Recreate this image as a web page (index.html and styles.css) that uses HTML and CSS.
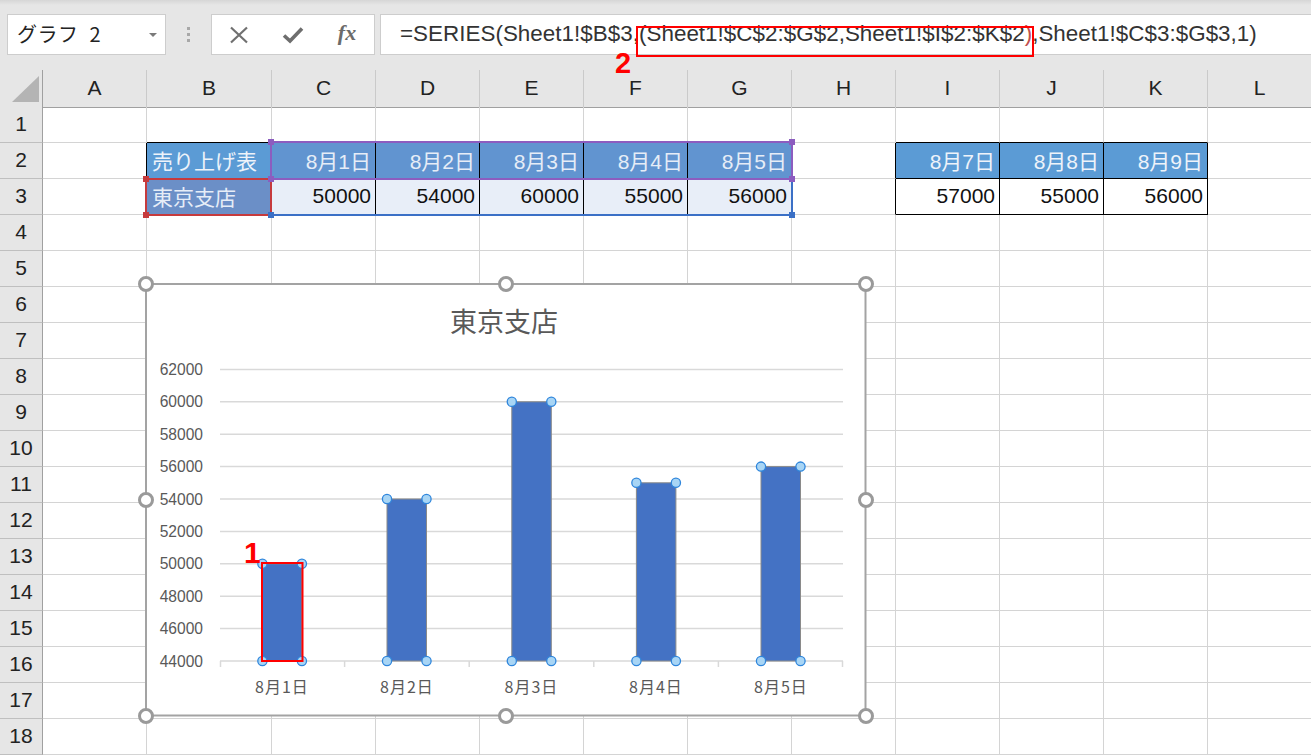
FILE: index.html
```html
<!DOCTYPE html>
<html lang="ja">
<head>
<meta charset="utf-8">
<title>Excel</title>
<link rel="stylesheet" href="styles.css">
</head>
<body>
<div class="app">
  <div class="toolbar">
    <div class="namebox"><span class="nbtext">グラフ 2</span><span class="caret"></span></div>
    <div class="grip"><i></i><i></i><i></i></div>
    <div class="btns">
      <div class="btn"><svg width="20" height="18" viewBox="0 0 20 18"><path d="M2 1.5 L18 16.5 M18 1.5 L2 16.5" stroke="#707070" stroke-width="2.2" fill="none"/></svg></div>
      <div class="btn"><svg width="22" height="18" viewBox="0 0 22 18"><path d="M2 9.5 L8 15 L20 2.5" stroke="#6e6e6e" stroke-width="3.6" fill="none"/></svg></div>
      <div class="btn fx">fx</div>
    </div>
    <div class="fbox"><span class="ftext">=SERIES(Sheet1!$B$3,(Sheet1!$C$2:$G$2,Sheet1!$I$2:$K$2<span class="rp">)</span>,Sheet1!$C$3:$G$3,1)</span></div>
  </div>

  <div class="sheet">
    <div class="r hdr"><div class="corner"><svg width="42" height="36" viewBox="0 0 42 36"><polygon points="12,32 39,6 39,32" fill="#b4b4b4"/></svg></div><div>A</div><div>B</div><div>C</div><div>D</div><div>E</div><div>F</div><div>G</div><div>H</div><div>I</div><div>J</div><div>K</div><div>L</div></div>
    <div class="r"><div class="rh">1</div><div></div><div class="bb"></div><div class="bb"></div><div class="bb"></div><div class="bb"></div><div class="bb"></div><div class="bb"></div><div></div><div class="bb"></div><div class="bb"></div><div class="bb"></div><div></div></div>
    <div class="r"><div class="rh">2</div><div class="br"></div><div class="t k hb lft">売り上げ表</div><div class="t k hs">8月1日</div><div class="t k hs">8月2日</div><div class="t k hs">8月3日</div><div class="t k hs">8月4日</div><div class="t k hs">8月5日</div><div class="br"></div><div class="t k hb">8月7日</div><div class="t k hb">8月8日</div><div class="t k hb">8月9日</div><div></div></div>
    <div class="r"><div class="rh">3</div><div class="br"></div><div class="t k sb lft">東京支店</div><div class="t k sc">50000</div><div class="t k sc">54000</div><div class="t k sc">60000</div><div class="t k sc">55000</div><div class="t k sc">56000</div><div class="br"></div><div class="t k">57000</div><div class="t k">55000</div><div class="t k">56000</div><div></div></div>
    <div class="r"><div class="rh">4</div><div></div><div></div><div></div><div></div><div></div><div></div><div></div><div></div><div></div><div></div><div></div><div></div></div>
    <div class="r"><div class="rh">5</div><div></div><div></div><div></div><div></div><div></div><div></div><div></div><div></div><div></div><div></div><div></div><div></div></div>
    <div class="r"><div class="rh">6</div><div></div><div></div><div></div><div></div><div></div><div></div><div></div><div></div><div></div><div></div><div></div><div></div></div>
    <div class="r"><div class="rh">7</div><div></div><div></div><div></div><div></div><div></div><div></div><div></div><div></div><div></div><div></div><div></div><div></div></div>
    <div class="r"><div class="rh">8</div><div></div><div></div><div></div><div></div><div></div><div></div><div></div><div></div><div></div><div></div><div></div><div></div></div>
    <div class="r"><div class="rh">9</div><div></div><div></div><div></div><div></div><div></div><div></div><div></div><div></div><div></div><div></div><div></div><div></div></div>
    <div class="r"><div class="rh">10</div><div></div><div></div><div></div><div></div><div></div><div></div><div></div><div></div><div></div><div></div><div></div><div></div></div>
    <div class="r"><div class="rh">11</div><div></div><div></div><div></div><div></div><div></div><div></div><div></div><div></div><div></div><div></div><div></div><div></div></div>
    <div class="r"><div class="rh">12</div><div></div><div></div><div></div><div></div><div></div><div></div><div></div><div></div><div></div><div></div><div></div><div></div></div>
    <div class="r"><div class="rh">13</div><div></div><div></div><div></div><div></div><div></div><div></div><div></div><div></div><div></div><div></div><div></div><div></div></div>
    <div class="r"><div class="rh">14</div><div></div><div></div><div></div><div></div><div></div><div></div><div></div><div></div><div></div><div></div><div></div><div></div></div>
    <div class="r"><div class="rh">15</div><div></div><div></div><div></div><div></div><div></div><div></div><div></div><div></div><div></div><div></div><div></div><div></div></div>
    <div class="r"><div class="rh">16</div><div></div><div></div><div></div><div></div><div></div><div></div><div></div><div></div><div></div><div></div><div></div><div></div></div>
    <div class="r"><div class="rh">17</div><div></div><div></div><div></div><div></div><div></div><div></div><div></div><div></div><div></div><div></div><div></div><div></div></div>
    <div class="r"><div class="rh">18</div><div></div><div></div><div></div><div></div><div></div><div></div><div></div><div></div><div></div><div></div><div></div><div></div></div>
  </div>

  <!-- range highlight overlays -->
  <div class="sel sel-blue"></div>
  <div class="sel sel-red"></div>
  <div class="sel sel-purple"></div>
  <i class="hd hd-blue" style="left:268px;top:212px"></i>
  <i class="hd hd-blue" style="left:789px;top:212px"></i>
  <i class="hd hd-red" style="left:143px;top:176px"></i>
  <i class="hd hd-red" style="left:143px;top:212px"></i>
  <i class="hd hd-purple" style="left:268px;top:139px"></i>
  <i class="hd hd-purple" style="left:789px;top:139px"></i>
  <i class="hd hd-purple" style="left:268px;top:176px"></i>
  <i class="hd hd-purple" style="left:789px;top:176px"></i>

  <!-- chart object -->
  <svg class="chart" width="740" height="452" viewBox="136 274 740 452">
    <rect x="146" y="284" width="719.5" height="431.5" fill="#fff" stroke="#a3a3a3" stroke-width="2"/>
    <text class="ctitle" x="504" y="332">東京支店</text>
    <g stroke="#d9d9d9" stroke-width="1.5">
      <line x1="220" x2="843" y1="369.4" y2="369.4"/>
      <line x1="220" x2="843" y1="401.8" y2="401.8"/>
      <line x1="220" x2="843" y1="434.2" y2="434.2"/>
      <line x1="220" x2="843" y1="466.6" y2="466.6"/>
      <line x1="220" x2="843" y1="499" y2="499"/>
      <line x1="220" x2="843" y1="531.4" y2="531.4"/>
      <line x1="220" x2="843" y1="563.8" y2="563.8"/>
      <line x1="220" x2="843" y1="596.2" y2="596.2"/>
      <line x1="220" x2="843" y1="628.6" y2="628.6"/>
      <line x1="220" x2="843" y1="661" y2="661"/>
      <line x1="220.5" x2="220.5" y1="661" y2="667"/>
      <line x1="344.6" x2="344.6" y1="661" y2="667"/>
      <line x1="469.2" x2="469.2" y1="661" y2="667"/>
      <line x1="593.8" x2="593.8" y1="661" y2="667"/>
      <line x1="718.4" x2="718.4" y1="661" y2="667"/>
      <line x1="842.5" x2="842.5" y1="661" y2="667"/>
    </g>
    <g class="ylab">
      <text x="203" y="374.9">62000</text>
      <text x="203" y="407.3">60000</text>
      <text x="203" y="439.7">58000</text>
      <text x="203" y="472.1">56000</text>
      <text x="203" y="504.5">54000</text>
      <text x="203" y="536.9">52000</text>
      <text x="203" y="569.3">50000</text>
      <text x="203" y="601.7">48000</text>
      <text x="203" y="634.1">46000</text>
      <text x="203" y="666.5">44000</text>
    </g>
    <g fill="#4472c4" stroke="#8a8a8a" stroke-width="1">
      <rect x="262.4" y="563.8" width="39.5" height="97.2"/>
      <rect x="387" y="499" width="39.5" height="162"/>
      <rect x="511.8" y="401.8" width="39.5" height="259.2"/>
      <rect x="636.4" y="482.8" width="39.5" height="178.2"/>
      <rect x="761" y="466.6" width="39.5" height="194.4"/>
    </g>
    <g fill="#a8d5f5" stroke="#2f86dc" stroke-width="1.3">
      <circle cx="262.4" cy="563.8" r="4.6"/><circle cx="301.9" cy="563.8" r="4.6"/>
      <circle cx="262.4" cy="661" r="4.6"/><circle cx="301.9" cy="661" r="4.6"/>
      <circle cx="387" cy="499" r="4.6"/><circle cx="426.5" cy="499" r="4.6"/>
      <circle cx="387" cy="661" r="4.6"/><circle cx="426.5" cy="661" r="4.6"/>
      <circle cx="511.8" cy="401.8" r="4.6"/><circle cx="551.3" cy="401.8" r="4.6"/>
      <circle cx="511.8" cy="661" r="4.6"/><circle cx="551.3" cy="661" r="4.6"/>
      <circle cx="636.4" cy="482.8" r="4.6"/><circle cx="675.9" cy="482.8" r="4.6"/>
      <circle cx="636.4" cy="661" r="4.6"/><circle cx="675.9" cy="661" r="4.6"/>
      <circle cx="761" cy="466.6" r="4.6"/><circle cx="800.5" cy="466.6" r="4.6"/>
      <circle cx="761" cy="661" r="4.6"/><circle cx="800.5" cy="661" r="4.6"/>
    </g>
    <rect x="262" y="563" width="40.5" height="98" fill="none" stroke="#ff0000" stroke-width="2"/>
    <g class="xlab">
      <text x="282" y="693">8月1日</text>
      <text x="407" y="693">8月2日</text>
      <text x="531.5" y="693">8月3日</text>
      <text x="656" y="693">8月4日</text>
      <text x="781" y="693">8月5日</text>
    </g>
    <text class="mark" x="244" y="563">1</text>
    <g fill="#fff" stroke="#9a9a9a" stroke-width="3">
      <circle cx="146" cy="284" r="6.5"/>
      <circle cx="506" cy="284" r="6.5"/>
      <circle cx="866" cy="284" r="6.5"/>
      <circle cx="146" cy="500" r="6.5"/>
      <circle cx="866" cy="500" r="6.5"/>
      <circle cx="146" cy="716" r="6.5"/>
      <circle cx="506" cy="716" r="6.5"/>
      <circle cx="866" cy="716" r="6.5"/>
    </g>
  </svg>

  <!-- annotations -->
  <div class="callout-box"></div>
  <div class="callout-num">2</div>
</div>
</body>
</html>
```
FILE: styles.css
```css
* { box-sizing: border-box; margin: 0; padding: 0; }
html, body { width: 1311px; height: 755px; overflow: hidden; background: #fff; }
body { font-family: "Liberation Sans", "Noto Sans CJK JP", sans-serif; color: #222; }
.app { position: relative; width: 1311px; height: 755px; overflow: hidden; }

/* formula bar */
.toolbar {
  height: 70px;
  background: linear-gradient(#d6d6d6, #e6e6e6 5px);
  display: flex;
  align-items: flex-start;
  padding: 14px 0 0 7px;
}
.namebox {
  width: 159px; height: 41px;
  background: #fff; border: 1px solid #cdcdcd;
  display: flex; align-items: center; justify-content: space-between;
  padding: 0 8px 2px 9px;
  font-family: "Noto Sans CJK JP", sans-serif; font-size: 20px; color: #222;
}
.nbtext { word-spacing: 6px; letter-spacing: 0.5px; }
.caret {
  width: 0; height: 0;
  border-left: 4px solid transparent; border-right: 4px solid transparent;
  border-top: 4px solid #7a7a7a;
  margin-top: 2px;
}
.grip {
  width: 45px; height: 41px;
  display: flex; flex-direction: column; align-items: center; justify-content: center; gap: 3px;
}
.grip i { display: block; width: 3px; height: 3px; background: #a8a8a8; }
.btns {
  width: 164px; height: 41px;
  background: #fff; border: 1px solid #cdcdcd;
  display: flex; align-items: center;
}
.btn { width: 54px; height: 39px; display: flex; align-items: center; justify-content: center; }
.btn.fx {
  font-family: "Liberation Serif", serif; font-style: italic; font-weight: bold;
  font-size: 22px; color: #6b6b6b; padding-bottom: 3px;
}
.fbox {
  flex: 1; margin-left: 5px; height: 41px;
  background: #fff; border: 1px solid #cdcdcd; border-right: none;
  padding: 6px 0 0 19px;
  white-space: nowrap; overflow: hidden;
}
.ftext {
  display: block;
  font-size: 22.4px; line-height: 26px; color: #333;
  letter-spacing: 0.03px;
}
.rp { color: #c0504d; }

/* sheet grid */
.sheet { display: flex; flex-direction: column; }
.r {
  display: grid;
  grid-template-columns: 43px 104px 125px repeat(10, 104px);
  height: 36px;
}
.r > div {
  border-right: 1px solid #d4d4d4;
  border-bottom: 1px solid #d4d4d4;
  font-size: 21px;
}
.r.hdr { height: 37px; background: #e6e6e6; }
.r.hdr > div {
  display: flex; align-items: center; justify-content: center;
  border-right-color: #cacaca; border-bottom-color: #a0a0a0;
  color: #222; padding-bottom: 1px;
}
.r.hdr > .corner { border-right-color: #a0a0a0; align-items: flex-start; justify-content: flex-start; }
.r > .rh {
  background: #e6e6e6;
  border-right-color: #a0a0a0; border-bottom-color: #bfbfbf;
  display: flex; align-items: center; justify-content: center;
  color: #222; padding-bottom: 1px;
}
.r > .bb { border-bottom-color: #000; }
.r > .br { border-right-color: #000; }
.r > .k { border-right-color: #000; border-bottom-color: #000; }
.t {
  display: flex; align-items: center; justify-content: flex-end;
  padding: 0 4px 2px 0; color: #111; white-space: nowrap;
}
.t.lft { justify-content: flex-start; padding-left: 5px; }
.t.hb { background: #5b9bd5; color: #eef3fa; }
.t.hs { background: #6194d0; color: #e6edf7; }
.t.sb { background: #6b8fc7; color: #e6edf7; }
.t.sc { background: #e8eef8; color: #111; }

/* range highlight overlays */
.sel { position: absolute; border: 2px solid; pointer-events: none; }
.sel-purple { left: 270px; top: 141px; width: 523px; height: 39px; border-color: #8c5cbf; }
.sel-red { left: 145px; top: 178px; width: 127px; height: 38px; border-color: #c63a3d; }
.sel-blue { left: 270px; top: 178px; width: 523px; height: 38px; border-color: #3b70c6; }
.hd { position: absolute; display: block; width: 6px; height: 6px; }
.hd-purple { background: #8c5cbf; }
.hd-red { background: #c63a3d; }
.hd-blue { background: #3b70c6; }

/* chart */
.chart { position: absolute; left: 136px; top: 274px; overflow: visible; }
.ctitle {
  font-family: "Noto Sans CJK JP", sans-serif; font-size: 27px; fill: #595959; text-anchor: middle;
}
.ylab text { font-family: "Liberation Sans", sans-serif; font-size: 15.6px; fill: #595959; text-anchor: end; }
.xlab text { font-family: "Noto Sans CJK JP", sans-serif; font-size: 16px; letter-spacing: 1px; fill: #595959; text-anchor: middle; }
.mark { font-family: "Liberation Sans", sans-serif; font-weight: bold; font-size: 30px; fill: #ff0000; }

/* annotations */
.callout-box {
  position: absolute; left: 636px; top: 26px; width: 398px; height: 31px;
  border: 2px solid #ff0000;
}
.callout-num {
  position: absolute; left: 615px; top: 52px;
  font-family: "Liberation Sans", sans-serif; font-weight: bold; font-size: 29px; line-height: 22px;
  color: #ff0000;
}
```
